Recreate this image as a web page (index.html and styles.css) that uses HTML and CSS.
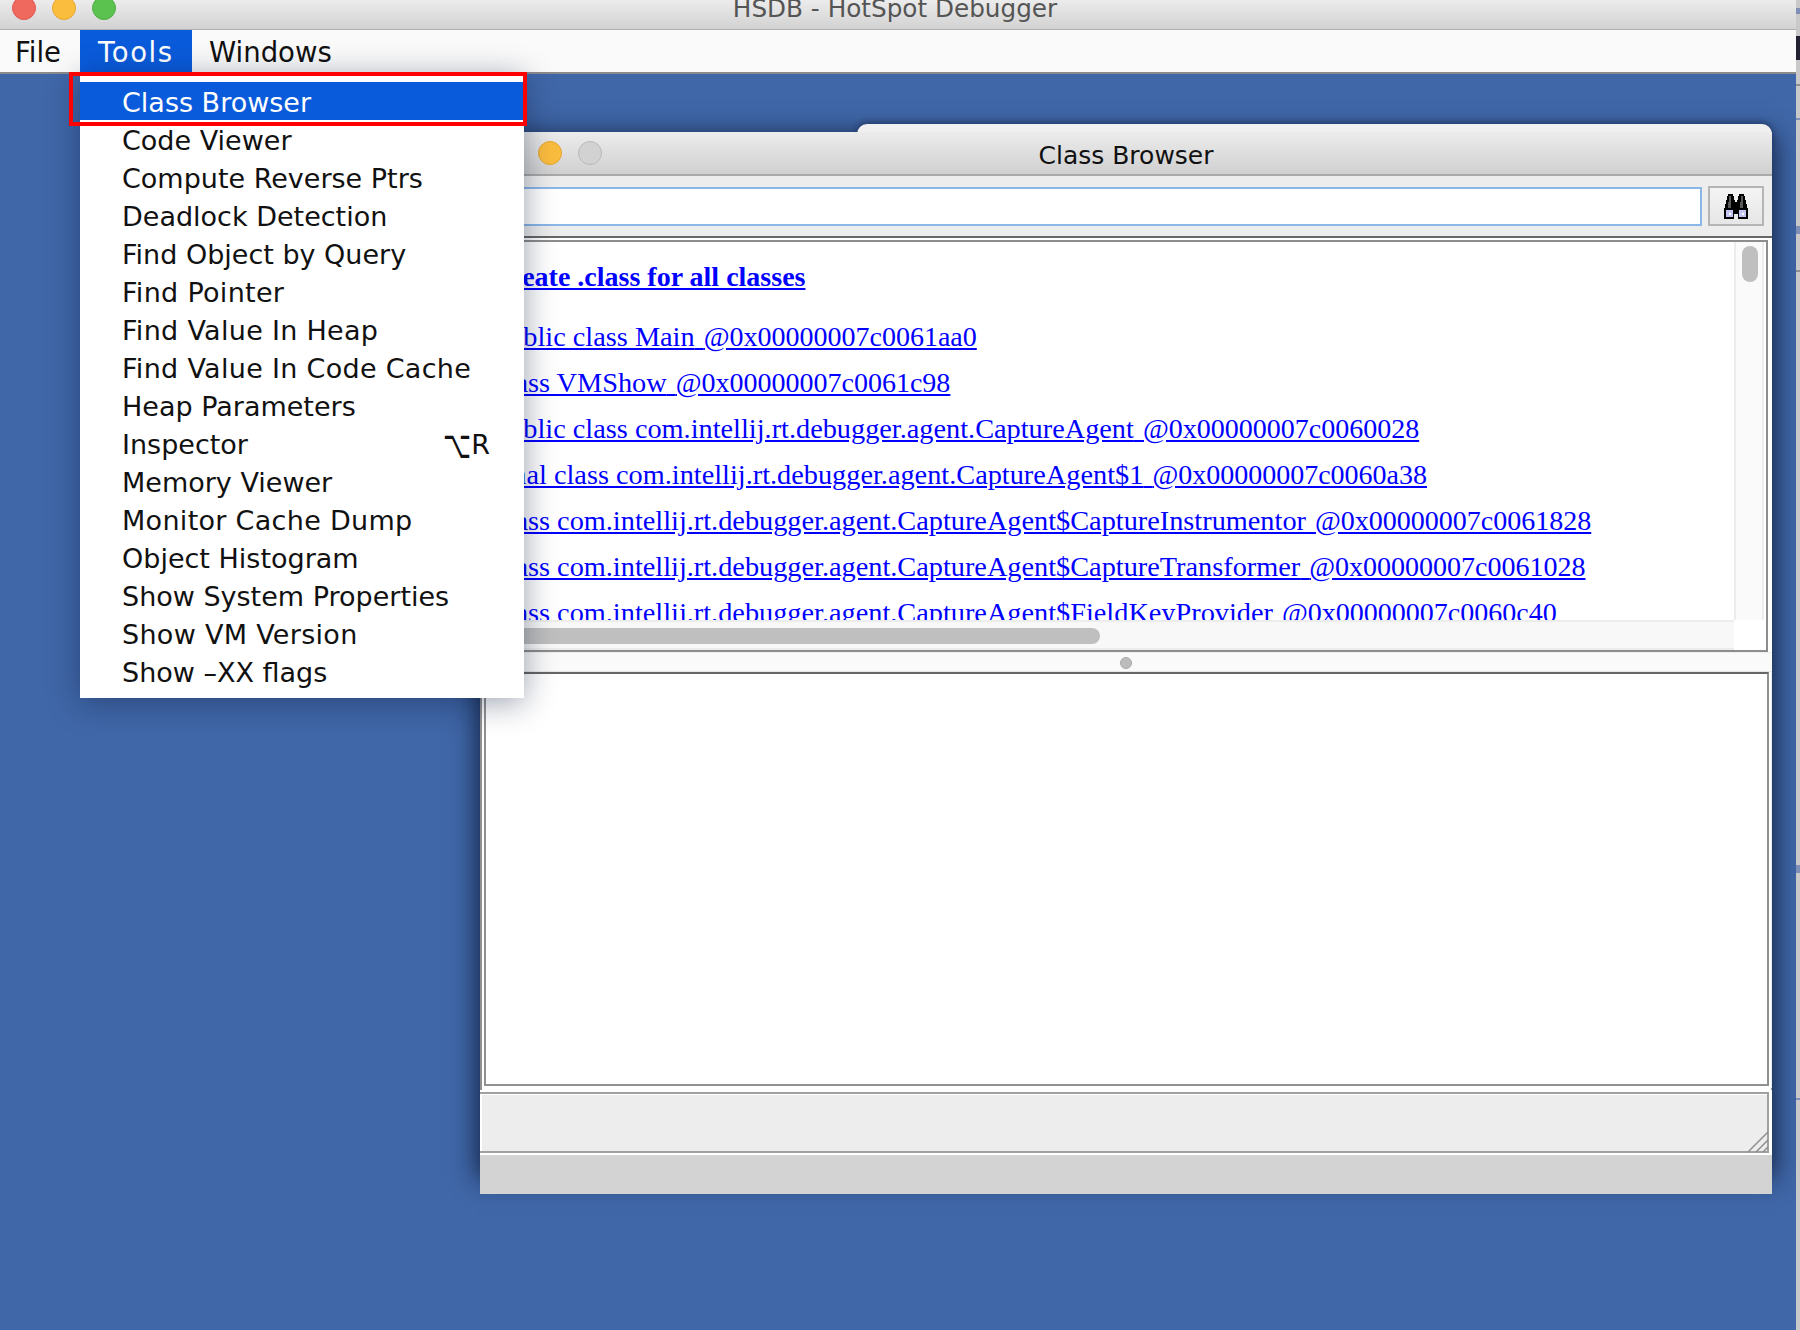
FILE: index.html
```html
<!DOCTYPE html>
<html lang="en">
<head>
<meta charset="utf-8">
<title>HSDB - HotSpot Debugger</title>
<link rel="stylesheet" href="styles.css">
</head>
<body>
<div class="app">
  <header class="titlebar">
    <span class="light red"></span><span class="light amber"></span><span class="light green"></span>
    <span class="app-title">HSDB - HotSpot Debugger</span>
  </header>
  <nav class="menubar">
    <span class="menu">File</span>
    <span class="menu active">Tools</span>
    <span class="menu last">Windows</span>
  </nav>
  <main class="desktop">
    <div class="win-shadow"></div>
    <div class="window-back"></div>
    <section class="window">
      <div class="win-title">
        <span class="light amber win-amber"></span><span class="light grey"></span>
        <span class="win-name">Class Browser</span>
      </div>
      <div class="search-row">
        <div class="search-input"></div>
        <button class="search-btn" aria-label="Find">
          <svg width="26" height="25" viewBox="0 0 26 25" shape-rendering="crispEdges">
            <path d="M5 0h5l2 8h2l2-8h5l4 16v9H15v-5h-4v5H1v-9z" fill="#000"/>
            <path d="M6 2h2v6H6zM5 8h3v6H5zM18 2h2v6h-2zM17 8h3v6h-3z" fill="#5a5a5a"/>
            <path d="M3 16h7v7H3zM16 16h7v7h-7z" fill="#c5c5f2"/>
            <path d="M6 19h2v2H6zM19 19h2v2h-2z" fill="#fff"/>
          </svg>
        </button>
      </div>
      <div class="class-pane">
        <div class="class-inner">
          <div class="class-list">
            <p class="heading"><a href="#">Create .class for all classes</a></p>
            <p class="row"><a href="#">public class Main<span class="gap"> </span><span class="addr">@0x00000007c0061aa0</span></a></p>
            <p class="row"><a href="#">class VMShow<span class="gap"> </span><span class="addr">@0x00000007c0061c98</span></a></p>
            <p class="row"><a href="#">public class com.intellij.rt.debugger.agent.CaptureAgent<span class="gap"> </span><span class="addr">@0x00000007c0060028</span></a></p>
            <p class="row"><a href="#">final class com.intellij.rt.debugger.agent.CaptureAgent$1<span class="gap"> </span><span class="addr">@0x00000007c0060a38</span></a></p>
            <p class="row"><a href="#">class com.intellij.rt.debugger.agent.CaptureAgent$CaptureInstrumentor<span class="gap"> </span><span class="addr">@0x00000007c0061828</span></a></p>
            <p class="row"><a href="#">class com.intellij.rt.debugger.agent.CaptureAgent$CaptureTransformer<span class="gap"> </span><span class="addr">@0x00000007c0061028</span></a></p>
            <p class="row"><a href="#">class com.intellij.rt.debugger.agent.CaptureAgent$FieldKeyProvider<span class="gap"> </span><span class="addr">@0x00000007c0060c40</span></a></p>
          </div>
          <div class="vscroll"><span class="vthumb"></span></div>
          <div class="hscroll"><span class="hthumb"></span></div>
          <div class="corner"></div>
        </div>
      </div>
      <div class="splitter"><span class="split-dot"></span></div>
      <div class="detail-pane"></div>
      <div class="status-pane">
        <div class="status-box">
          <svg class="grip" width="22" height="22" viewBox="0 0 22 22">
            <path d="M1 21 21 1M9 21 21 9M16 21l5-5" stroke="#8e8e8e" stroke-width="1.5" fill="none"/>
          </svg>
        </div>
      </div>
      <div class="win-foot"></div>
    </section>
    <ul class="popup">
      <li class="item selected">Class Browser</li>
      <li class="item">Code Viewer</li>
      <li class="item">Compute Reverse Ptrs</li>
      <li class="item">Deadlock Detection</li>
      <li class="item">Find Object by Query</li>
      <li class="item wide">Find Pointer</li>
      <li class="item wide">Find Value In Heap</li>
      <li class="item wide">Find Value In Code Cache</li>
      <li class="item">Heap Parameters</li>
      <li class="item">Inspector<span class="shortcut"><span class="opt">⌥</span>R</span></li>
      <li class="item">Memory Viewer</li>
      <li class="item wide">Monitor Cache Dump</li>
      <li class="item">Object Histogram</li>
      <li class="item">Show System Properties</li>
      <li class="item wide">Show VM Version</li>
      <li class="item">Show –XX flags</li>
    </ul>
    <div class="redbox"></div>
  </main>
  <div class="edge"></div>
</div>
</body>
</html>
```
FILE: styles.css
```css
* { box-sizing: border-box; }
html, body { margin: 0; padding: 0; }
body { width: 1800px; height: 1330px; overflow: hidden; font-family: "DejaVu Sans", sans-serif; background: #4067a8; }
.app { position: relative; width: 1800px; height: 1330px; display: flex; flex-direction: column; overflow: hidden; }

.titlebar { position: relative; flex: 0 0 30px; background: linear-gradient(#ececec, #d2d2d2); border-bottom: 1px solid #b0b0b0; display: flex; gap: 16px; padding-left: 12px; overflow: hidden; }
.light { display: block; width: 24px; height: 24px; border-radius: 50%; flex: none; }
.titlebar .light { margin-top: -4px; }
.red { background: #f0695e; border: 1px solid #e0564c; }
.amber { background: #fbbd3e; border: 1px solid #e5a52c; }
.green { background: #5cc24f; border: 1px solid #4cae40; }
.grey { background: #d2d2d2; border: 1px solid #b9b9b9; }
.app-title { position: absolute; left: 0; right: 10px; top: -7px; text-align: center; font-size: 24.7px; line-height: 32px; color: #555; }

.menubar { flex: 0 0 44px; background: #fafafa; border-bottom: 2px solid #8b8b8b; display: flex; font-size: 27.5px; }
.menu { display: block; height: 42px; line-height: 45px; padding: 0 15px; color: #111; white-space: nowrap; }
.menu:first-child { width: 80px; }
.menu.active { width: 112px; padding-left: 18px; background: #0a5bdb; color: #fff; letter-spacing: 1.6px; }
.menu.last { padding-left: 17px; }

.desktop { position: relative; flex: 1; background: #4067a8; }

.win-shadow { position: absolute; left: 480px; top: 64px; width: 1292px; height: 1038px; box-shadow: 0 0 24px 3px rgba(8, 18, 42, .8); }
.window-back { position: absolute; left: 857px; top: 50px; width: 915px; height: 24px; background: #f0f0f0; border-radius: 10px 10px 0 0; border-bottom: 2px solid #b3b3b3; box-shadow: 0 -2px 6px rgba(8, 18, 42, .4); }
.window { position: absolute; left: 480px; top: 58px; width: 1292px; height: 1062px; display: flex; flex-direction: column; background: #ededed; }
.win-title { position: relative; flex: 0 0 44px; background: linear-gradient(#ececec, #d0d0d0); border-bottom: 2px solid #a9a9a9; display: flex; gap: 16px; padding: 9px 0 0 58px; }
.win-name { position: absolute; left: 0; right: 0; top: 0; text-align: center; line-height: 48px; font-size: 25px; color: #111; }

.search-row { flex: 0 0 60px; display: flex; gap: 6px; padding: 10px 8px 0 0; }
.search-input { flex: 1; height: 39px; margin-top: 1px; background: #fff; border: 2px solid #8ab6ea; border-left: 0; }
.search-btn { width: 56px; height: 40px; padding: 0; display: flex; align-items: center; justify-content: center; background: linear-gradient(#f4f4f4, #e6e6e6); border: 2px solid #b5b5b5; }

.class-pane { flex: 0 0 416px; padding: 0 4px 0 0; border-top: 2px solid #666; background: #fff; }
.class-inner { height: 412px; margin-top: 2px; border: 2px solid #8d8d8d; background: #fff; overflow: hidden; display: grid; grid-template-columns: 1fr 32px; grid-template-rows: 378px 30px; }
.class-list { overflow: hidden; font-family: "Liberation Serif", serif; font-size: 28.3px; }
.class-list p { margin: 0; white-space: nowrap; line-height: 46px; height: 46px; padding-left: 13px; }
.class-list a { color: #0000ff; text-decoration: underline; }
.class-list .heading { font-weight: 700; font-size: 28px; margin-top: 12px; margin-bottom: 14px; padding-left: 8px; }
.gap { word-spacing: 2px; }
.addr { font-size: 28px; }
.vscroll { position: relative; background: #fafafa; border-left: 2px solid #ececec; border-right: 2px solid #ececec; margin-right: 2px; }
.vthumb { position: absolute; left: 6px; top: 4px; width: 16px; height: 36px; border-radius: 8px; background: #bfbfbf; }
.hscroll { position: relative; background: #f8f8f8; border-top: 2px solid #ececec; border-bottom: 2px solid #ececec; }
.hthumb { position: absolute; left: 0; top: 6px; width: 618px; height: 16px; border-radius: 8px; background: #bfbfbf; }
.corner { background: #fff; }

.splitter { flex: 0 0 20px; display: flex; align-items: center; justify-content: center; padding-top: 1px; background: #fafafa; border-top: 1px solid #eee; border-bottom: 1px solid #e6e6e6; }
.split-dot { width: 12px; height: 12px; border-radius: 50%; background: #bcbcbc; border: 1px solid #aaa; }

.detail-pane { flex: 0 0 414px; position: relative; background: #fff; border-top: 2px solid #666; border-right: 2px solid #909090; border-bottom: 2px solid #909090; border-left: 2px solid #909090; margin: 0 3px 0 4px; box-shadow: 0 2px 0 2px #fff, -2px 2px 0 2px #909090; }
.status-pane { flex: 0 0 65px; margin-top: 2px; padding-top: 2px; background: #fff; border-top: 2px solid #909090; }
.status-box { position: relative; height: 61px; margin-right: 3px; background: #ededed; border-top: 2px solid #a0a0a0; border-right: 2px solid #a0a0a0; border-bottom: 2px solid #a0a0a0; box-shadow: inset 2px 1px 0 #fff; }
.grip { position: absolute; right: -2px; bottom: -2px; }
.win-foot { flex: 1; background: #d3d3d3; border-top: 2px solid #fff; }

.popup { position: absolute; left: 80px; top: 0; width: 444px; height: 624px; margin: 0; padding: 8px 0 0; list-style: none; background: #fff; box-shadow: 0 4px 30px rgba(10, 25, 55, .42); font-size: 27px; }
.item { position: relative; height: 38px; line-height: 42px; padding-left: 42px; color: #111; white-space: nowrap; }
.item.wide { letter-spacing: .3px; }
.item.selected { background: #0a5bdb; color: #fff; }
.shortcut { position: absolute; right: 34px; top: 0; }
.opt { display: inline-block; transform: scale(.9, 1.45); transform-origin: 100% 50%; }

.redbox { position: absolute; left: 69px; top: -2px; width: 458px; height: 54px; border: 4px solid #f00; }

.edge { position: absolute; left: 1796px; top: 0; width: 4px; height: 1330px; background-color: #c9c9c9;
  background-image:
    linear-gradient(#223, #223), linear-gradient(#7f8fb5, #7f8fb5), linear-gradient(#8f8f8f, #8f8f8f),
    linear-gradient(#7f8fb5, #7f8fb5), linear-gradient(#7f8fb5, #7f8fb5), linear-gradient(#8f8f8f, #8f8f8f),
    linear-gradient(#7f8fb5, #7f8fb5), linear-gradient(#7f8fb5, #7f8fb5);
  background-repeat: no-repeat;
  background-size: 100% 24px, 100% 6px, 100% 2px, 100% 2px, 100% 8px, 100% 2px, 100% 8px, 100% 2px;
  background-position: 0 36px, 0 8px, 0 84px, 0 118px, 0 226px, 0 270px, 0 865px, 0 1098px; }
```
